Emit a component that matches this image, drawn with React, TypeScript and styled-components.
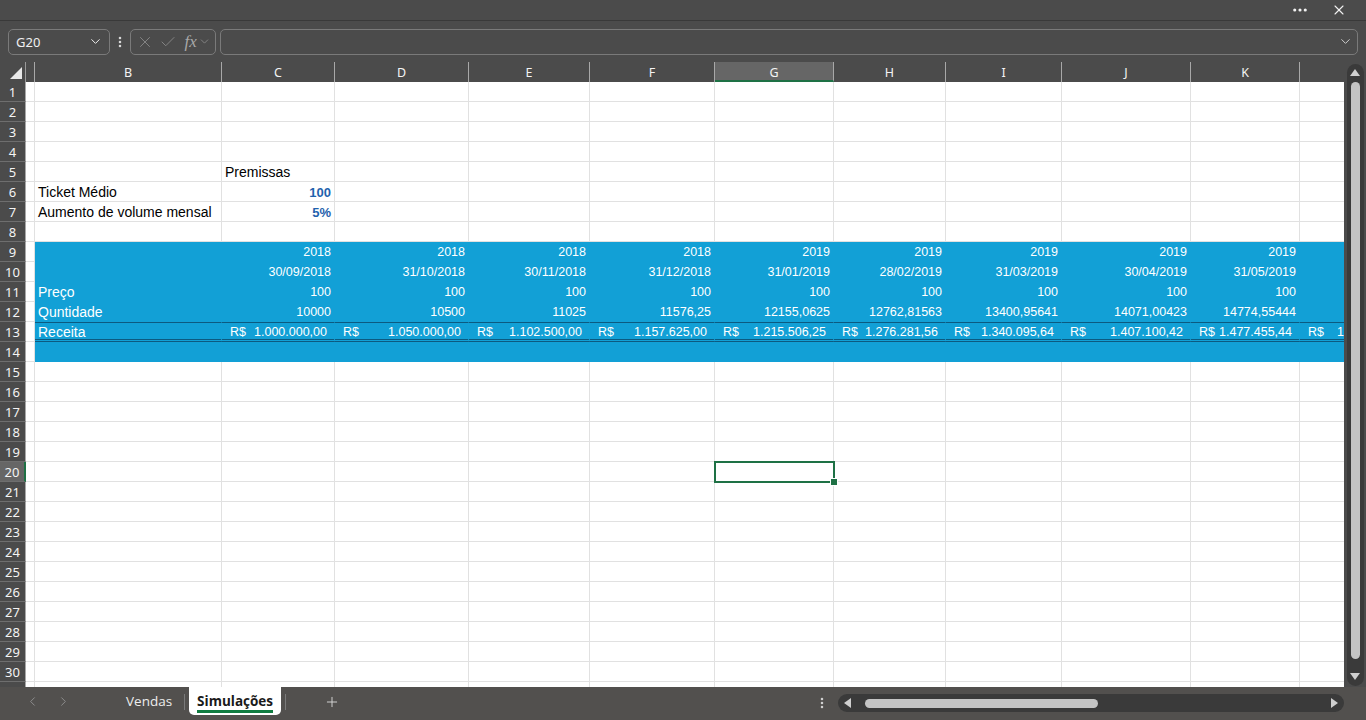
import React from "react";
import styled, { createGlobalStyle, css } from "styled-components";
import {
  Check,
  ChevronDown,
  ChevronLeft,
  ChevronRight,
  Ellipsis,
  EllipsisVertical,
  Plus,
  X,
} from "lucide-react";

// column widths: row header, A, B ... L
const COLS = [26, 9, 187, 113, 134, 121, 125, 119, 112, 116, 129, 109, 118];
const LETTERS = ["", "", "B", "C", "D", "E", "F", "G", "H", "I", "J", "K", "L"];
const ROW_COUNT = 31;
const ROW_H = 20;
const HEAD_H = 20;
const ACTIVE = { col: 7, row: 20 };
const LAST_COL = COLS.length - 1;

const BAND = "#12a0d6";
const BAND_LINE = "#0c5a80";
const GREEN = "#1e7145";

type Kind = "text" | "num" | "input" | "money";
interface CellData {
  text: string;
  kind?: Kind;
  align?: "left" | "right";
}

const years = ["2018", "2018", "2018", "2018", "2019", "2019", "2019", "2019", "2019"];
const dates = [
  "30/09/2018", "31/10/2018", "30/11/2018", "31/12/2018", "31/01/2019",
  "28/02/2019", "31/03/2019", "30/04/2019", "31/05/2019",
];
const qty = [
  "10000", "10500", "11025", "11576,25", "12155,0625",
  "12762,81563", "13400,95641", "14071,00423", "14774,55444",
];
const revenue = [
  "1.000.000,00", "1.050.000,00", "1.102.500,00", "1.157.625,00", "1.215.506,25",
  "1.276.281,56", "1.340.095,64", "1.407.100,42", "1.477.455,44", "1.551.328,21",
];

const isBand = (row: number, col: number) => row >= 9 && row <= 14 && col >= 2;

function cellAt(row: number, col: number): CellData | null {
  const i = col - 3; // index into the monthly series (C = 0)
  if (row === 5 && col === 3) return { text: "Premissas" };
  if (row === 6 && col === 2) return { text: "Ticket Médio" };
  if (row === 6 && col === 3) return { text: "100", kind: "input", align: "right" };
  if (row === 7 && col === 2) return { text: "Aumento de volume mensal" };
  if (row === 7 && col === 3) return { text: "5%", kind: "input", align: "right" };
  if (col === 2) {
    if (row === 11) return { text: "Preço" };
    if (row === 12) return { text: "Quntidade" };
    if (row === 13) return { text: "Receita" };
    return null;
  }
  if (i < 0) return null;
  if (row === 13) return { text: revenue[i], kind: "money" };
  // the last column only peeks in, its right-aligned values sit past the edge
  if (col === LAST_COL) return null;
  if (row === 9) return { text: years[i], kind: "num", align: "right" };
  if (row === 10) return { text: dates[i], kind: "num", align: "right" };
  if (row === 11) return { text: "100", kind: "num", align: "right" };
  if (row === 12) return { text: qty[i], kind: "num", align: "right" };
  return null;
}

const GlobalStyle = createGlobalStyle`
  html, body {
    margin: 0;
    padding: 0;
    background: #4b4b4b;
    overflow: hidden;
  }
  body {
    font-family: "Liberation Sans", Arial, sans-serif;
  }
`;

const Window = styled.div`
  width: 1366px;
  height: 720px;
  display: flex;
  flex-direction: column;
  background: #4b4b4b;
  overflow: hidden;
`;

const TitleStrip = styled.div`
  height: 20px;
  flex: none;
  display: flex;
  align-items: center;
  justify-content: flex-end;
  gap: 22px;
  padding-right: 19px;
  border-bottom: 1px solid #393939;
  color: #f2f2f2;
`;

const FormulaBar = styled.div`
  height: 41px;
  flex: none;
  display: flex;
  align-items: center;
  padding: 0 8px;
`;

const Field = styled.div`
  box-sizing: border-box;
  height: 26px;
  border: 1px solid #7a7a7a;
  border-radius: 5px;
  display: flex;
  align-items: center;
  color: #f0f0f0;
`;

const NameBox = styled(Field)`
  width: 102px;
  padding: 0 6px 0 7px;
  justify-content: space-between;
  font-family: "Noto Sans", "Open Sans", sans-serif;
  font-size: 13px;
`;

const Kebab = styled.div`
  width: 20px;
  display: flex;
  justify-content: center;
  color: #d8d8d8;
`;

const FxGroup = styled(Field)`
  width: 86px;
  padding: 0 4px 0 5px;
  justify-content: space-between;
  color: #8a8a8a;
`;

const FxMark = styled.span`
  font-family: "Liberation Serif", "Times New Roman", serif;
  font-style: italic;
  font-size: 17px;
  color: #a8a8a8;
  margin-left: 2px;
  margin-right: -4px;
`;

const FormulaInput = styled(Field)`
  flex: 1;
  margin-left: 4px;
  justify-content: flex-end;
  padding-right: 4px;
  color: #cfcfcf;
`;

const SheetArea = styled.div`
  height: 625px;
  flex: none;
  display: flex;
`;

const Viewport = styled.div`
  width: 1344px;
  flex: none;
  overflow: hidden;
  background: #fff;
`;

const Grid = styled.div`
  position: relative;
  display: grid;
  grid-template-columns: ${COLS.map((w) => `${w}px`).join(" ")};
  grid-auto-rows: ${ROW_H}px;
  width: max-content;
`;

const Corner = styled.div`
  box-sizing: border-box;
  background: #4b4b4b;
  border-right: 1px solid #9a9a9a;
  display: flex;
  align-items: flex-end;
  justify-content: flex-end;
  padding: 0 3px 3px 0;

  &::after {
    content: "";
    width: 0;
    height: 0;
    border-left: 12px solid transparent;
    border-bottom: 12px solid #e8e8e8;
  }
`;

const ColHead = styled.div<{ $active: boolean }>`
  box-sizing: border-box;
  background: ${(p) => (p.$active ? "#666666" : "#4b4b4b")};
  border-right: 1px solid #a8a8a8;
  color: #f4f4f4;
  font-family: "Noto Sans", "Open Sans", sans-serif;
  font-size: 12.5px;
  display: flex;
  align-items: center;
  justify-content: center;
  white-space: nowrap;
  overflow: hidden;
  ${(p) =>
    p.$active &&
    css`
      border-bottom: 2px solid ${GREEN};
      padding-top: 2px;
    `}
`;

const RowHead = styled.div<{ $active: boolean }>`
  box-sizing: border-box;
  background: ${(p) => (p.$active ? "#666666" : "#4b4b4b")};
  border-bottom: 1px solid #6e6e6e;
  border-right: ${(p) => (p.$active ? `2px solid ${GREEN}` : "1px solid #a8a8a8")};
  color: #f4f4f4;
  font-family: "Noto Sans", "Open Sans", sans-serif;
  font-size: 13px;
  display: flex;
  align-items: center;
  justify-content: center;
`;

const Cell = styled.div<{
  $band: boolean;
  $total: boolean;
  $kind: Kind;
  $align: "left" | "right";
}>`
  box-sizing: border-box;
  min-width: 0;
  display: flex;
  align-items: center;
  justify-content: ${(p) => (p.$align === "right" ? "flex-end" : "flex-start")};
  padding: 1px 3px 0 3px;
  white-space: nowrap;
  font-size: ${(p) => (p.$kind === "text" ? "14px" : "12.5px")};
  font-weight: ${(p) => (p.$kind === "input" ? 700 : 400)};
  color: ${(p) => (p.$band ? "#ffffff" : p.$kind === "input" ? "#1f62ad" : "#000000")};
  background: ${(p) => (p.$band ? BAND : "#ffffff")};
  border-right: 1px solid ${(p) => (p.$band ? BAND : "#e1e1e1")};
  border-bottom: 1px solid ${(p) => (p.$band ? BAND : "#e1e1e1")};
  ${(p) =>
    p.$kind === "input" &&
    css`
      font-size: 13px;
    `}
  ${(p) =>
    p.$total &&
    css`
      border-top: 1px solid ${BAND_LINE};
      border-bottom: 3px double ${BAND_LINE};
      padding-top: 1px;
    `}
`;

const Money = styled.span`
  flex: 1;
  display: flex;
  justify-content: space-between;
  padding: 0 4px 0 5px;
`;

const Selection = styled.div`
  position: absolute;
  box-sizing: border-box;
  border: 2px solid ${GREEN};
  pointer-events: none;

  &::after {
    content: "";
    position: absolute;
    right: -5px;
    bottom: -5px;
    width: 6px;
    height: 6px;
    background: ${GREEN};
    border: 1px solid #ffffff;
  }
`;

const VScroll = styled.div`
  width: 22px;
  flex: none;
  display: flex;
  justify-content: center;
  padding: 2px 0 1px;
  box-sizing: border-box;
`;

const VTrack = styled.div`
  width: 17px;
  border-radius: 9px;
  background: #3a3a3a;
  display: flex;
  flex-direction: column;
  align-items: center;
  padding: 5px 0 6px;
  box-sizing: border-box;
`;

const VThumb = styled.div`
  width: 9px;
  flex: 1;
  margin: 6px 0 14px;
  border-radius: 5px;
  background: #c4c4c4;
`;

const Arrow = styled.span<{ $dir: "up" | "down" | "left" | "right" }>`
  width: 0;
  height: 0;
  flex: none;
  ${(p) =>
    p.$dir === "up" &&
    css`
      border-left: 5px solid transparent;
      border-right: 5px solid transparent;
      border-bottom: 7px solid #cfcfcf;
    `}
  ${(p) =>
    p.$dir === "down" &&
    css`
      border-left: 5px solid transparent;
      border-right: 5px solid transparent;
      border-top: 7px solid #cfcfcf;
    `}
  ${(p) =>
    p.$dir === "left" &&
    css`
      border-top: 5px solid transparent;
      border-bottom: 5px solid transparent;
      border-right: 7px solid #cfcfcf;
    `}
  ${(p) =>
    p.$dir === "right" &&
    css`
      border-top: 5px solid transparent;
      border-bottom: 5px solid transparent;
      border-left: 7px solid #cfcfcf;
    `}
`;

const BottomBar = styled.div`
  height: 33px;
  flex: none;
  display: flex;
  align-items: flex-start;
  background: #52504e;
`;

const SheetNav = styled.div`
  width: 96px;
  height: 29px;
  display: flex;
  align-items: center;
  justify-content: center;
  gap: 16px;
  color: #8f8f8f;
`;

const TabStrip = styled.div`
  display: flex;
  align-items: flex-start;
  margin-left: 22px;
`;

const Tab = styled.div<{ $active?: boolean }>`
  height: 28px;
  display: flex;
  align-items: center;
  padding: 0 8px;
  font-family: "Open Sans", "Noto Sans", sans-serif;
  font-size: 13.5px;
  color: #ececec;
  ${(p) =>
    p.$active &&
    css`
      background: #ffffff;
      color: #1a1a1a;
      font-weight: 700;
      border-radius: 0 0 5px 5px;
    `}
`;

const TabLabel = styled.span<{ $active?: boolean }>`
  padding-top: 2px;
  border-bottom: 3px solid ${(p) => (p.$active ? "#107c41" : "transparent")};
  line-height: 18px;
`;

const TabSep = styled.div`
  width: 1px;
  height: 16px;
  margin: 7px 4px 0;
  background: #7a7a7a;
`;

const AddSheet = styled.div`
  width: 84px;
  height: 30px;
  display: flex;
  align-items: center;
  justify-content: center;
  color: #d8d8d8;
`;

const Spacer = styled.div`
  flex: 1;
`;

const HScrollDots = styled.div`
  width: 28px;
  height: 32px;
  display: flex;
  align-items: center;
  justify-content: center;
  color: #d0d0d0;
`;

const HTrack = styled.div`
  width: 506px;
  height: 18px;
  margin: 7px 22px 0 2px;
  border-radius: 9px;
  background: #3a3a3a;
  display: flex;
  align-items: center;
  padding: 0 6px 0 6px;
  box-sizing: border-box;
`;

const HThumb = styled.div`
  width: 233px;
  height: 9px;
  margin-left: 14px;
  border-radius: 5px;
  background: #c4c4c4;
`;

function App() {
  const rows = Array.from({ length: ROW_COUNT }, (_, i) => i + 1);
  const selLeft = COLS.slice(0, ACTIVE.col).reduce((a, b) => a + b, 0) - 1;
  const selTop = HEAD_H + (ACTIVE.row - 1) * ROW_H - 1;

  return (
    <Window>
      <GlobalStyle />
      <TitleStrip>
        <Ellipsis size={18} strokeWidth={2.2} />
        <X size={16} strokeWidth={1.6} />
      </TitleStrip>

      <FormulaBar>
        <NameBox>
          <span>G20</span>
          <ChevronDown size={15} strokeWidth={1.6} />
        </NameBox>
        <Kebab>
          <EllipsisVertical size={14} strokeWidth={2.4} />
        </Kebab>
        <FxGroup>
          <X size={18} strokeWidth={1.2} />
          <Check size={18} strokeWidth={1.2} />
          <FxMark>fx</FxMark>
          <ChevronDown size={13} strokeWidth={1.6} />
        </FxGroup>
        <FormulaInput>
          <ChevronDown size={15} strokeWidth={1.6} />
        </FormulaInput>
      </FormulaBar>

      <SheetArea>
        <Viewport>
          <Grid>
            <Corner />
            {LETTERS.slice(1).map((letter, i) => (
              <ColHead key={i} $active={i + 1 === ACTIVE.col}>
                {i + 1 === LAST_COL ? "" : letter}
              </ColHead>
            ))}

            {rows.map((r) => (
              <React.Fragment key={r}>
                <RowHead $active={r === ACTIVE.row}>{r}</RowHead>
                {COLS.slice(1).map((_, i) => {
                  const c = i + 1;
                  const data = cellAt(r, c);
                  const band = isBand(r, c);
                  const kind = data?.kind ?? "text";
                  return (
                    <Cell
                      key={c}
                      $band={band}
                      $total={band && r === 13}
                      $kind={kind}
                      $align={data?.align ?? "left"}
                    >
                      {data &&
                        (kind === "money" ? (
                          <Money>
                            <span>R$</span>
                            <span>{data.text}</span>
                          </Money>
                        ) : (
                          data.text
                        ))}
                    </Cell>
                  );
                })}
              </React.Fragment>
            ))}

            <Selection
              style={{
                left: selLeft,
                top: selTop,
                width: COLS[ACTIVE.col] + 2,
                height: ROW_H + 2,
              }}
            />
          </Grid>
        </Viewport>

        <VScroll>
          <VTrack>
            <Arrow $dir="up" />
            <VThumb />
            <Arrow $dir="down" />
          </VTrack>
        </VScroll>
      </SheetArea>

      <BottomBar>
        <SheetNav>
          <ChevronLeft size={15} strokeWidth={1.5} />
          <ChevronRight size={15} strokeWidth={1.5} />
        </SheetNav>
        <TabStrip>
          <Tab>
            <TabLabel>Vendas</TabLabel>
          </Tab>
          <TabSep />
          <Tab $active>
            <TabLabel $active>Simulações</TabLabel>
          </Tab>
          <TabSep />
          <AddSheet>
            <Plus size={16} strokeWidth={1.4} />
          </AddSheet>
        </TabStrip>
        <Spacer />
        <HScrollDots>
          <EllipsisVertical size={14} strokeWidth={2.4} />
        </HScrollDots>
        <HTrack>
          <Arrow $dir="left" />
          <HThumb />
          <Spacer />
          <Arrow $dir="right" />
        </HTrack>
      </BottomBar>
    </Window>
  );
}

export default App;
